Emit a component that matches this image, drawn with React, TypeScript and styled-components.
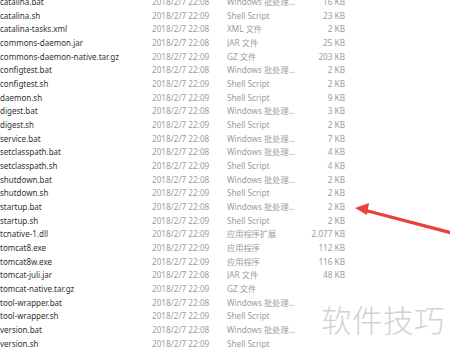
import styled, { createGlobalStyle } from "styled-components";

const GlobalStyle = createGlobalStyle`
  html, body {
    margin: 0;
    padding: 0;
    background: #ffffff;
    overflow: hidden;
  }
`;

const Page = styled.main`
  position: relative;
  width: 450px;
  height: 351px;
  overflow: hidden;
  background: #ffffff;
  font-family: "Noto Sans", "Noto Sans CJK SC", sans-serif;
`;

const List = styled.div`
  display: flex;
  flex-direction: column;
  margin-top: -5px;
`;

const Row = styled.div`
  display: grid;
  grid-template-columns: 152px 75px 73px 45px;
  align-items: center;
  height: 13.68px;
  font-size: 8.2px;
  line-height: 13.68px;
  white-space: nowrap;
`;

const Name = styled.span`
  color: #333333;
  font-size: 8px;
  overflow: hidden;
`;

const Muted = styled.span`
  color: #9c9c9c;
  overflow: hidden;
`;

const Size = styled(Muted)`
  text-align: right;
`;

const Watermark = styled.div`
  position: absolute;
  right: 5px;
  top: 297px;
  font-family: "Noto Sans CJK SC", sans-serif;
  font-size: 30.5px;
  letter-spacing: 0.5px;
  color: #d2d2d2;
  font-weight: 300;
`;

const Arrow = styled.svg`
  position: absolute;
  left: 350px;
  top: 198px;
`;

type FileRow = [string, string, string, string];

const files: FileRow[] = [
  ["catalina.bat", "22:08", "Windows 批处理...", "16 KB"],
  ["catalina.sh", "22:09", "Shell Script", "23 KB"],
  ["catalina-tasks.xml", "22:08", "XML 文件", "2 KB"],
  ["commons-daemon.jar", "22:08", "JAR 文件", "25 KB"],
  ["commons-daemon-native.tar.gz", "22:09", "GZ 文件", "203 KB"],
  ["configtest.bat", "22:08", "Windows 批处理...", "2 KB"],
  ["configtest.sh", "22:09", "Shell Script", "2 KB"],
  ["daemon.sh", "22:09", "Shell Script", "9 KB"],
  ["digest.bat", "22:08", "Windows 批处理...", "3 KB"],
  ["digest.sh", "22:09", "Shell Script", "2 KB"],
  ["service.bat", "22:08", "Windows 批处理...", "7 KB"],
  ["setclasspath.bat", "22:08", "Windows 批处理...", "4 KB"],
  ["setclasspath.sh", "22:09", "Shell Script", "4 KB"],
  ["shutdown.bat", "22:08", "Windows 批处理...", "2 KB"],
  ["shutdown.sh", "22:09", "Shell Script", "2 KB"],
  ["startup.bat", "22:08", "Windows 批处理...", "2 KB"],
  ["startup.sh", "22:09", "Shell Script", "2 KB"],
  ["tcnative-1.dll", "22:09", "应用程序扩展", "2,077 KB"],
  ["tomcat8.exe", "22:09", "应用程序", "112 KB"],
  ["tomcat8w.exe", "22:09", "应用程序", "116 KB"],
  ["tomcat-juli.jar", "22:08", "JAR 文件", "48 KB"],
  ["tomcat-native.tar.gz", "22:09", "GZ 文件", ""],
  ["tool-wrapper.bat", "22:08", "Windows 批处理...", ""],
  ["tool-wrapper.sh", "22:09", "Shell Script", ""],
  ["version.bat", "22:08", "Windows 批处理...", ""],
  ["version.sh", "22:09", "Shell Script", ""],
];

function App() {
  return (
    <Page>
      <GlobalStyle />
      <List>
        {files.map(([name, time, type, size]) => (
          <Row key={name}>
            <Name>{name}</Name>
            <Muted>2018/2/7 {time}</Muted>
            <Muted>{type}</Muted>
            <Size>{size}</Size>
          </Row>
        ))}
      </List>
      <Arrow width="100" height="40" viewBox="0 0 100 40">
        <line x1="14" y1="12" x2="102" y2="35" stroke="#e8403a" strokeWidth="3.2" strokeLinecap="round" />
        <polygon points="5,10 19,5 17,17" fill="#e8403a" />
      </Arrow>
      <Watermark>软件技巧</Watermark>
    </Page>
  );
}

export default App;
